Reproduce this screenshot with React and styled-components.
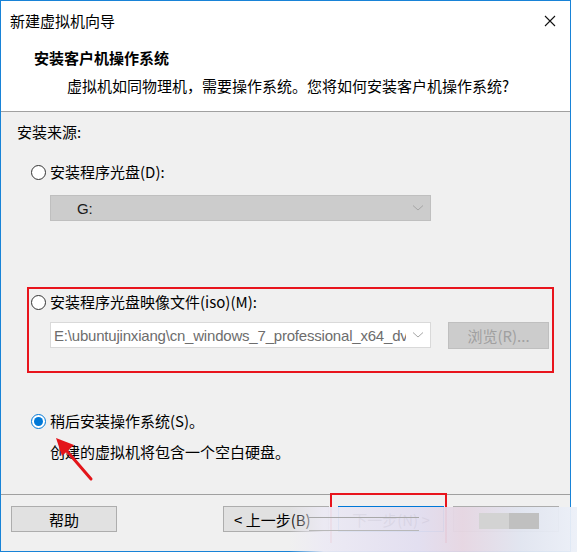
import React from 'react'
import styled, { createGlobalStyle } from 'styled-components'

const GlobalStyle = createGlobalStyle`
    html, body {
        margin: 0;
        padding: 0;
        background: #ffffff;
    }
    body {
        font-family: "Noto Sans CJK SC", "Microsoft YaHei", sans-serif;
        font-size: 15px;
        color: #000;
    }
`

function Radio(props) {
    return (
        <RadioRow>
            <RadioCircle checked={props.checked} />
            <Label>{props.label}</Label>
        </RadioRow>
    )
}

function Chevron() {
    return (
        <ChevronIcon width="12" height="8" viewBox="0 0 12 8">
            <path d="M1 1.5 L6 6 L11 1.5" fill="none" stroke="#a6a6a6" strokeWidth="1" />
        </ChevronIcon>
    )
}

export default function App() {
    return (
        <>
            <GlobalStyle />
            <Window>
                <TitleBar>
                    <Title>新建虚拟机向导</Title>
                    <CloseBtn>
                        <svg width="12" height="12" viewBox="0 0 12 12">
                            <path d="M1 1 L11 11 M11 1 L1 11" stroke="#111" strokeWidth="1.1" />
                        </svg>
                    </CloseBtn>
                </TitleBar>
                <Header>
                    <HeaderTitle>安装客户机操作系统</HeaderTitle>
                    <HeaderSub>虚拟机如同物理机，需要操作系统。您将如何安装客户机操作系统?</HeaderSub>
                </Header>
                <Body>
                    <SectionLabel>安装来源:</SectionLabel>
                    <Option>
                        <Radio label="安装程序光盘(D):" />
                        <FieldRow gap="13px">
                            <Combo disabled>
                                <ComboText disabled>G:</ComboText>
                                <Chevron />
                            </Combo>
                        </FieldRow>
                    </Option>
                    <Marked>
                        <Radio label="安装程序光盘映像文件(iso)(M):" />
                        <FieldRow gap="10px">
                            <Combo>
                                <ComboText>E:\ubuntujinxiang\cn_windows_7_professional_x64_dv</ComboText>
                                <Chevron />
                            </Combo>
                            <BrowseButton>浏览(R)...</BrowseButton>
                        </FieldRow>
                    </Marked>
                    <Option top="38px">
                        <Radio checked label="稍后安装操作系统(S)。" />
                        <Hint>创建的虚拟机将包含一个空白硬盘。</Hint>
                    </Option>
                    <Arrow width="50" height="50" viewBox="0 0 50 50">
                        <path d="M38 44 L13 15" stroke="#e3151a" strokeWidth="3" strokeLinecap="round" />
                        <path d="M3 3 L21 10 L9 21 Z" fill="#e3151a" />
                    </Arrow>
                </Body>
                <Footer>
                    <Button>帮助</Button>
                    <Spacer />
                    <Button align="left">&lt; 上一步(B)</Button>
                    <Button primary>下一步(N) &gt;</Button>
                    <Button>取消</Button>
                    <NextMark />
                    <Smudge />
                </Footer>
            </Window>
        </>
    )
}

const Window = styled.div`
    position: relative;
    width: 571px;
    height: 552px;
    box-sizing: border-box;
    border: 1px solid #1883d7;
    display: flex;
    flex-direction: column;
    background: #f0f0f0;
`

const TitleBar = styled.div`
    height: 39px;
    background: #fff;
    display: flex;
    align-items: center;
    justify-content: space-between;
    padding-left: 9px;
    padding-right: 14px;
`

const Title = styled.div`
    font-size: 15px;
    line-height: 20px;
`

const CloseBtn = styled.div`
    width: 12px;
    height: 12px;
    display: flex;
`

const Header = styled.div`
    background: #fff;
    border-bottom: 1px solid #a0a0a0;
    padding: 8px 0 15px 33px;
    height: 48px;
`

const HeaderTitle = styled.div`
    font-weight: 700;
    font-size: 15px;
    line-height: 20px;
`

const HeaderSub = styled.div`
    margin-top: 8px;
    padding-left: 33px;
    font-size: 15px;
    line-height: 20px;
`

const Body = styled.div`
    position: relative;
    flex: 1;
    padding: 10px 16px 0 16px;
    display: flex;
    flex-direction: column;
`

const SectionLabel = styled.div`
    line-height: 20px;
`

const Option = styled.div`
    margin-top: ${(p) => p.top || '20px'};
    padding-left: 14px;
`

const Marked = styled.div`
    margin: 66px 0 0 10px;
    width: 527px;
    height: 86px;
    box-sizing: border-box;
    border: 2px solid #e8141c;
    padding: 3px 0 0 2px;
`

const RadioRow = styled.div`
    display: flex;
    align-items: center;
    height: 20px;
    gap: 4px;
`

const RadioCircle = styled.span`
    width: 15px;
    height: 15px;
    box-sizing: border-box;
    border-radius: 50%;
    border: 1px solid ${(p) => (p.checked ? '#0078d7' : '#333')};
    background: #fff;
    display: flex;
    align-items: center;
    justify-content: center;
    &::after {
        content: '';
        width: 9px;
        height: 9px;
        border-radius: 50%;
        background: ${(p) => (p.checked ? '#0078d7' : 'transparent')};
    }
`

const Label = styled.span`
    font-size: 15px;
    line-height: 20px;
`

const FieldRow = styled.div`
    display: flex;
    align-items: flex-start;
    gap: 17px;
    margin-top: ${(p) => p.gap};
    padding-left: 19px;
`

const Combo = styled.div`
    width: 381px;
    height: 26px;
    box-sizing: border-box;
    border: 1px solid ${(p) => (p.disabled ? '#bfbfbf' : '#d9d9d9')};
    background: ${(p) => (p.disabled ? '#cccccc' : '#fff')};
    display: flex;
    align-items: center;
    padding: 0 6px 0 ${(p) => (p.disabled ? '26px' : '3px')};
    gap: 6px;
    overflow: hidden;
`

const ComboText = styled.span`
    flex: 1;
    min-width: 0;
    white-space: nowrap;
    overflow: hidden;
    font-family: "Liberation Sans", Arial, sans-serif;
    font-size: 15px;
    letter-spacing: -0.2px;
    color: ${(p) => (p.disabled ? '#1a1a1a' : '#6d6d6d')};
`

const ChevronIcon = styled.svg`
    flex-shrink: 0;
`

const BrowseButton = styled.div`
    width: 101px;
    height: 27px;
    box-sizing: border-box;
    border: 1px solid #bfbfbf;
    background: #cccccc;
    color: #a0a0a0;
    display: flex;
    align-items: center;
    justify-content: center;
    font-size: 15px;
`

const Hint = styled.div`
    margin-top: 11px;
    padding-left: 19px;
    line-height: 20px;
`

const Arrow = styled.svg`
    position: absolute;
    left: 52px;
    top: 323px;
`

const Footer = styled.div`
    position: relative;
    height: 45px;
    border-top: 1px solid #a0a0a0;
    display: flex;
    align-items: flex-start;
    padding: 11px 11px 0 10px;
    gap: 9px;
`

const Spacer = styled.div`
    flex: 1;
`

const Button = styled.div`
    width: 106px;
    height: 26px;
    box-sizing: border-box;
    border: 1px solid ${(p) => (p.primary ? '#0078d7' : '#adadad')};
    background: #e1e1e1;
    display: flex;
    align-items: center;
    justify-content: ${(p) => (p.align === 'left' ? 'flex-start' : 'center')};
    padding-left: ${(p) => (p.align === 'left' ? '10px' : '0')};
    font-size: 15px;
`

const NextMark = styled.div`
    position: absolute;
    left: 329px;
    top: -2px;
    width: 117px;
    height: 50px;
    box-sizing: border-box;
    border: 2px solid #e8141c;
    border-bottom: none;
`

const Smudge = styled.div`
    position: absolute;
    left: 288px;
    top: 12px;
    right: -8px;
    bottom: -2px;
    background:
        linear-gradient(90deg, rgba(240, 240, 245, 0) 0%, rgba(236, 234, 244, 0.95) 12%, rgba(226, 222, 240, 0.95) 45%, rgba(230, 214, 226, 0.95) 60%, rgba(225, 229, 240, 0.95) 80%, rgba(236, 240, 248, 0.95) 100%);
    &::before {
        content: '';
        position: absolute;
        left: 20px;
        top: 10px;
        width: 110px;
        height: 1px;
        background: #a8a8a8;
        box-shadow: 0 13px 0 #b8b8b8;
    }
    &::after {
        content: '';
        position: absolute;
        left: 190px;
        top: 6px;
        width: 60px;
        height: 16px;
        background: linear-gradient(90deg, #d3d3d3 0 50%, #c0c0c0 50% 100%);
    }
`
